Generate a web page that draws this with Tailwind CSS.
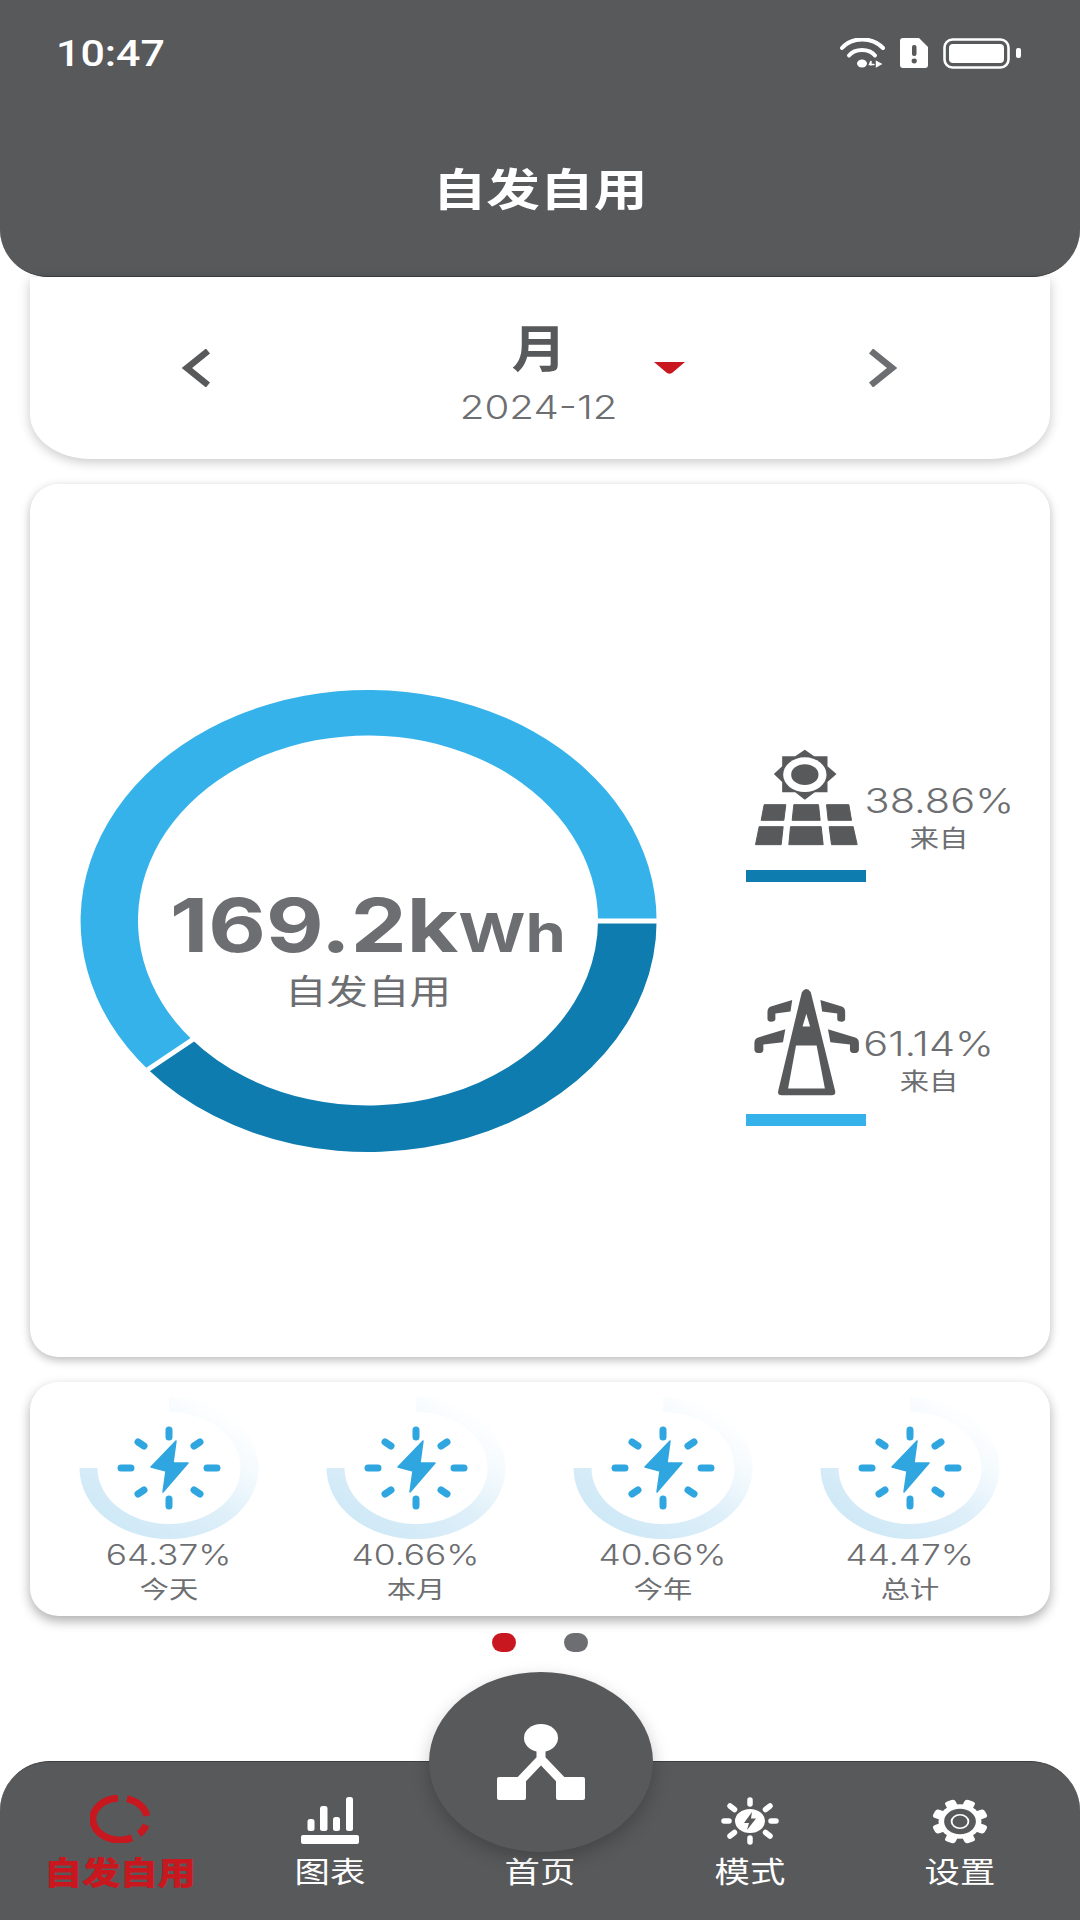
<!DOCTYPE html>
<html lang="zh">
<head>
<meta charset="UTF-8">
<title>自发自用</title>
<script src="https://cdn.jsdelivr.net/npm/@tailwindcss/browser@4"></script>
</head>
<body>
<div class="w-[1080px] h-[1920px] bg-white flex flex-col overflow-hidden relative font-['Inter','Noto_Sans_CJK_SC',sans-serif] text-[#6d6e71]">

  <!-- header -->
  <div class="h-[277px] shrink-0 bg-[#58595b] rounded-b-[48px] border-b border-[#3f3f40] flex flex-col">
    <div class="flex items-start justify-between pt-[38px] pl-[56px] pr-[59px] h-[110px]">
      <span class="inline-block origin-left scale-x-[1.16] text-white text-[37px] leading-[31px] font-medium font-['Roboto',sans-serif]">10:47</span>
      <div class="flex items-start">
        <svg class="w-[45px] h-[30px]" viewBox="0 0 45 30" fill="none" stroke="#fff" stroke-width="4" stroke-linecap="round">
          <path d="M2 10C12 -1.500 32 -1.500 43 10"/>
          <path d="M9 17.500C15 10 29 10 35 17.500"/>
          <ellipse cx="22" cy="25.500" rx="5" ry="4" fill="#fff" stroke="none"/>
          <path d="M31 27V23L29.500 26.500H34M36.500 23.500L41 26L36.500 28.500Z" stroke-width="1.400" fill="#fff"/>
        </svg>
        <svg class="w-[28px] h-[30px] ml-[15px]" viewBox="0 0 28 30">
          <path d="M3 0H19L28 9V27A3 3 0 0 1 25 30H3A3 3 0 0 1 0 27V3A3 3 0 0 1 3 0Z" fill="#fff"/>
          <rect x="12" y="7" width="4.500" height="11" rx="2" fill="#58595b"/>
          <ellipse cx="14.200" cy="23" rx="2.600" ry="2.400" fill="#58595b"/>
        </svg>
        <svg class="w-[78px] h-[31px] ml-[15px]" viewBox="0 0 78 31">
          <rect x="1.500" y="1.500" width="64" height="28" rx="8" fill="none" stroke="#fff" stroke-width="2.600"/>
          <rect x="6" y="6" width="55" height="19" rx="4" fill="#fff"/>
          <rect x="73" y="10" width="5" height="10" rx="2" fill="#fff"/>
        </svg>
      </div>
    </div>
    <div class="flex justify-center pt-[55px]">
      <span class="inline-block scale-x-[1.22] text-white text-[44px] leading-[50px] font-bold">自发自用</span>
    </div>
  </div>

  <!-- period picker -->
  <div class="h-[182px] shrink-0 mx-[30px] bg-white rounded-b-[60px_45px] shadow-[0_3px_12px_rgba(0,0,0,0.22)] flex items-center pl-[152px]">
    <svg class="w-[28px] h-[38px]" viewBox="0 0 28 38" fill="none" stroke="#58595b" stroke-width="6.500"><path d="M26 2L5 19L26 36"/></svg>
    <div class="w-[300px] ml-[179px] flex flex-col items-center relative pt-[11px]">
      <span class="inline-block scale-x-[1.1] text-[#58595b] text-[50px] leading-[56px] font-semibold">月</span>
      <span class="inline-block scale-x-[1.22] text-[33px] leading-[40px] font-light mt-[10px]">2024-12</span>
      <svg class="absolute left-[265px] top-[52px] w-[31px] h-[12px]" viewBox="0 0 31 12"><path d="M0 0H31L18 11Q15.500 12.500 13 11Z" fill="#c8171e"/></svg>
    </div>
    <svg class="w-[28px] h-[38px] ml-[180px]" viewBox="0 0 28 38" fill="none" stroke="#6d6e71" stroke-width="6.500"><path d="M2 2L23 19L2 36"/></svg>
  </div>

  <!-- self use card -->
  <div class="h-[873px] shrink-0 mx-[30px] mt-[25px] bg-white rounded-[28px] shadow-[0_3px_10px_rgba(0,0,0,0.28)] flex items-center">
    <div class="relative w-[660px] h-[480px] shrink-0">
      <svg class="w-[660px] h-[480px]" viewBox="0 0 660 480">
        <path d="M626.600 240A288 231 0 1 0 118 388.500L162.400 359A230 185 0 1 1 568 240Z" fill="#36b2eb"/>
        <path d="M626.600 240A288 231 0 0 1 118 388.500L162.400 359A230 185 0 0 0 568 240Z" fill="#0f7cb0"/>
        <path d="M562 240H632M112 392.500L168 355" stroke="#fff" stroke-width="5"/>
      </svg>
      <div class="absolute left-[108px] top-[209px] w-[460px] flex flex-col items-center">
        <span class="inline-block scale-x-[1.2] text-[74px] leading-[70px] font-bold whitespace-nowrap">169.2k<span class="text-[54px]">Wh</span></span>
        <span class="inline-block scale-x-[1.22] text-[34px] leading-[40px] mt-[4px]">自发自用</span>
      </div>
    </div>
    <div class="self-start mt-[264px] ml-[56px] flex flex-col">
      <div class="flex items-start">
        <svg class="w-[107px] h-[98px] shrink-0 ml-[7px]" viewBox="100 80 320 294" fill="#58595b">
          <path d="M255 85L283 105H323V135L350 158L323 182V213H285L255 235L226 213H187V182L162 158L187 135V105H226Z"/>
          <ellipse cx="255" cy="160" rx="65" ry="52" fill="#fff"/>
          <ellipse cx="255" cy="160" rx="41" ry="31"/>
          <path d="M133 250H198L192 297H124ZM222 250H296L301 297H217ZM320 250H387L395 297H325ZM118 316H190L184 370H107ZM212 316H304L310 370H207ZM328 316H400L412 370H335Z" stroke="#58595b" stroke-width="3" stroke-linejoin="round"/>
        </svg>
        <div class="flex flex-col items-center ml-[6px] pt-[34px] w-[146px]">
          <span class="inline-block scale-x-[1.22] text-[34px] leading-[38px] font-light whitespace-nowrap">38.86%</span>
          <span class="inline-block scale-x-[1.22] text-[24px] leading-[30px] mt-[4px]">来自</span>
        </div>
      </div>
      <div class="w-[120px] h-[12px] bg-[#0f7cb0] mt-[16px]"></div>

      <div class="flex items-start mt-[105px]">
        <svg class="w-[112px] h-[110px] shrink-0 ml-[5px]" viewBox="100 805 320 320" fill="#58595b">
          <path d="M245 820Q258 802 271 820L342 1108Q344 1120 332 1120H186Q174 1120 176 1108ZM258 883L247 920H269ZM228 975L205 1100H312L288 975Z" fill-rule="evenodd"/>
          <path d="M217 843L155 862Q145 866 145 878V898Q146 906 155 906Q168 906 168 898V882L212 876ZM299 843L361 862Q371 866 371 878V898Q370 906 361 906Q348 906 348 898V882L304 876ZM197 928L118 952Q107 956 107 968V988Q108 997 120 997Q133 997 133 988V972L190 966ZM321 928L400 952Q411 956 411 968V988Q410 997 398 997Q385 997 385 988V972L328 966Z"/>
        </svg>
        <div class="flex flex-col items-center pt-[38px] w-[122px] ml-[5px]">
          <span class="inline-block scale-x-[1.22] text-[34px] leading-[38px] font-light whitespace-nowrap">61.14%</span>
          <span class="inline-block scale-x-[1.22] text-[24px] leading-[30px] mt-[4px]">来自</span>
        </div>
      </div>
      <div class="w-[120px] h-[12px] bg-[#36b2eb] mt-[17px]"></div>
    </div>
  </div>

  <!-- stats -->
  <div class="h-[234px] shrink-0 mx-[30px] mt-[25px] bg-white rounded-[28px] shadow-[0_5px_12px_rgba(0,0,0,0.32)] grid grid-cols-4 pl-[15px] pr-[17px]">
    <div class="flex flex-col items-center">
      <svg class="w-[180px] h-[143px] mt-[15px] shrink-0" viewBox="0 0 180 143">
        <defs>
          <linearGradient id="fade" x1="0" y1="1" x2="0.8" y2="0">
            <stop offset="0" stop-color="#c8e6f5"/>
            <stop offset="0.5" stop-color="#deeff9"/>
            <stop offset="0.72" stop-color="#f2f9fd"/>
            <stop offset="0.95" stop-color="#ffffff"/>
          </linearGradient>
        </defs>
        <path d="M0.500 71A89.500 71 0 1 0 90 0V15A71.500 56 0 1 1 18.500 71Z" fill="url(#fade)"/>
        <g transform="translate(90 71)">
          <path d="M7 -27L-18 -1L-3 3L-6 24L19 -5L4 -5Z" fill="#2fa6e0" stroke="#2fa6e0" stroke-width="1.500" stroke-linejoin="round"/>
          <path d="M0 -38V-31M0 31V38M-48 0H-38M38 0H48M-31 -26L-25 -22M31 -26L25 -22M-31 26L-25 22M31 26L25 22" stroke="#2fa6e0" stroke-width="7" stroke-linecap="round"/>
        </g>
      </svg>
      <span class="inline-block scale-x-[1.22] text-[29px] leading-[30px] font-light">64.37%</span>
      <span class="inline-block scale-x-[1.22] text-[24px] leading-[30px] mt-[5px]">今天</span>
    </div>
    <div class="flex flex-col items-center">
      <svg class="w-[180px] h-[143px] mt-[15px] shrink-0" viewBox="0 0 180 143">
        <path d="M0.500 71A89.500 71 0 1 0 90 0V15A71.500 56 0 1 1 18.500 71Z" fill="url(#fade)"/>
        <g transform="translate(90 71)">
          <path d="M7 -27L-18 -1L-3 3L-6 24L19 -5L4 -5Z" fill="#2fa6e0" stroke="#2fa6e0" stroke-width="1.500" stroke-linejoin="round"/>
          <path d="M0 -38V-31M0 31V38M-48 0H-38M38 0H48M-31 -26L-25 -22M31 -26L25 -22M-31 26L-25 22M31 26L25 22" stroke="#2fa6e0" stroke-width="7" stroke-linecap="round"/>
        </g>
      </svg>
      <span class="inline-block scale-x-[1.22] text-[29px] leading-[30px] font-light">40.66%</span>
      <span class="inline-block scale-x-[1.22] text-[24px] leading-[30px] mt-[5px]">本月</span>
    </div>
    <div class="flex flex-col items-center">
      <svg class="w-[180px] h-[143px] mt-[15px] shrink-0" viewBox="0 0 180 143">
        <path d="M0.500 71A89.500 71 0 1 0 90 0V15A71.500 56 0 1 1 18.500 71Z" fill="url(#fade)"/>
        <g transform="translate(90 71)">
          <path d="M7 -27L-18 -1L-3 3L-6 24L19 -5L4 -5Z" fill="#2fa6e0" stroke="#2fa6e0" stroke-width="1.500" stroke-linejoin="round"/>
          <path d="M0 -38V-31M0 31V38M-48 0H-38M38 0H48M-31 -26L-25 -22M31 -26L25 -22M-31 26L-25 22M31 26L25 22" stroke="#2fa6e0" stroke-width="7" stroke-linecap="round"/>
        </g>
      </svg>
      <span class="inline-block scale-x-[1.22] text-[29px] leading-[30px] font-light">40.66%</span>
      <span class="inline-block scale-x-[1.22] text-[24px] leading-[30px] mt-[5px]">今年</span>
    </div>
    <div class="flex flex-col items-center">
      <svg class="w-[180px] h-[143px] mt-[15px] shrink-0" viewBox="0 0 180 143">
        <path d="M0.500 71A89.500 71 0 1 0 90 0V15A71.500 56 0 1 1 18.500 71Z" fill="url(#fade)"/>
        <g transform="translate(90 71)">
          <path d="M7 -27L-18 -1L-3 3L-6 24L19 -5L4 -5Z" fill="#2fa6e0" stroke="#2fa6e0" stroke-width="1.500" stroke-linejoin="round"/>
          <path d="M0 -38V-31M0 31V38M-48 0H-38M38 0H48M-31 -26L-25 -22M31 -26L25 -22M-31 26L-25 22M31 26L25 22" stroke="#2fa6e0" stroke-width="7" stroke-linecap="round"/>
        </g>
      </svg>
      <span class="inline-block scale-x-[1.22] text-[29px] leading-[30px] font-light">44.47%</span>
      <span class="inline-block scale-x-[1.22] text-[24px] leading-[30px] mt-[5px]">总计</span>
    </div>
  </div>

  <!-- page dots -->
  <div class="flex justify-center gap-[48px] mt-[17px]">
    <div class="w-[24px] h-[19px] rounded-full bg-[#c8171e]"></div>
    <div class="w-[24px] h-[19px] rounded-full bg-[#6d6e71]"></div>
  </div>

  <!-- bottom nav -->
  <div class="mt-auto h-[159px] shrink-0 bg-[#58595b] rounded-t-[50px] border-t border-[#3f3f40] relative px-[15px] grid grid-cols-5 text-white">
    <div class="flex flex-col items-center pt-[33px]">
      <svg class="w-[60px] h-[48px]" viewBox="0 0 60 48" fill="none" stroke="#c8171e" stroke-width="7">
        <path d="M28 3.100A27 21 0 1 0 42 42.800"/>
        <path d="M37 3.900A27 21 0 0 1 56.800 21"/>
        <path d="M56 30A27 21 0 0 1 49 39"/>
      </svg>
      <span class="inline-block scale-x-[1.22] text-[#c8171e] text-[31px] leading-[36px] font-bold [-webkit-text-stroke:1px_#c8171e] mt-[12px] whitespace-nowrap">自发自用</span>
    </div>
    <div class="flex flex-col items-center pt-[35px]">
      <svg class="w-[58px] h-[47px]" viewBox="0 0 58 47" fill="#fff">
        <rect x="6.500" y="22" width="7" height="12" rx="2.500"/>
        <rect x="19" y="9" width="7.500" height="25" rx="2.500"/>
        <rect x="32" y="20" width="7" height="14" rx="2.500"/>
        <rect x="45" y="0" width="7" height="34" rx="2.500"/>
        <rect x="0" y="38" width="58" height="9" rx="2"/>
      </svg>
      <span class="inline-block scale-x-[1.22] text-[29px] leading-[36px] mt-[11px]">图表</span>
    </div>
    <div class="flex flex-col items-center pt-[93px]">
      <span class="inline-block scale-x-[1.22] text-[29px] leading-[36px]">首页</span>
    </div>
    <div class="flex flex-col items-center pt-[35px]">
      <svg class="w-[58px] h-[48px]" viewBox="0 0 58 48">
        <ellipse cx="29" cy="24" rx="15" ry="12" fill="#fff"/>
        <path d="M31 15L23 26H28L26 33L35 21.500H30Z" fill="#58595b"/>
        <path d="M29 3V7M29 41V45M3 24H8M50 24H55M9 9L13.500 12.500M49 9L44.500 12.500M9 39L13.500 35.500M49 39L44.500 35.500" stroke="#fff" stroke-width="5.500" stroke-linecap="round" fill="none"/>
      </svg>
      <span class="inline-block scale-x-[1.22] text-[29px] leading-[36px] mt-[10px]">模式</span>
    </div>
    <div class="flex flex-col items-center pt-[37px]">
      <svg class="w-[56px] h-[45px]" viewBox="-30 -30 60 60" preserveAspectRatio="none">
        <g fill="#fff">
          <circle r="23"/>
          <rect x="-6" y="-30" width="12" height="12" rx="3.500" transform="rotate(22.500)"/>
          <rect x="-6" y="-30" width="12" height="12" rx="3.500" transform="rotate(67.500)"/>
          <rect x="-6" y="-30" width="12" height="12" rx="3.500" transform="rotate(112.500)"/>
          <rect x="-6" y="-30" width="12" height="12" rx="3.500" transform="rotate(157.500)"/>
          <rect x="-6" y="-30" width="12" height="12" rx="3.500" transform="rotate(202.500)"/>
          <rect x="-6" y="-30" width="12" height="12" rx="3.500" transform="rotate(247.500)"/>
          <rect x="-6" y="-30" width="12" height="12" rx="3.500" transform="rotate(292.500)"/>
          <rect x="-6" y="-30" width="12" height="12" rx="3.500" transform="rotate(337.500)"/>
        </g>
        <circle r="17" fill="#58595b"/>
        <circle r="9" fill="none" stroke="#fff" stroke-width="2"/>
      </svg>
      <span class="inline-block scale-x-[1.22] text-[29px] leading-[36px] mt-[11px]">设置</span>
    </div>

    <!-- home button -->
    <div class="absolute left-[429px] -top-[90px] w-[224px] h-[180px] rounded-[50%] bg-[#58595b] shadow-[0_7px_18px_rgba(0,0,0,0.22)] flex items-center justify-center">
      <svg class="w-[90px] h-[76px]" viewBox="0 0 90 76" fill="#fff">
        <ellipse cx="45" cy="14" rx="17" ry="14"/>
        <path d="M45 20V37M45 35L24 57M45 35L66 57" stroke="#fff" stroke-width="9" fill="none"/>
        <rect x="1" y="53" width="29" height="23" rx="2"/>
        <rect x="60" y="53" width="29" height="23" rx="2"/>
      </svg>
    </div>
  </div>
</div>
</body>
</html>
